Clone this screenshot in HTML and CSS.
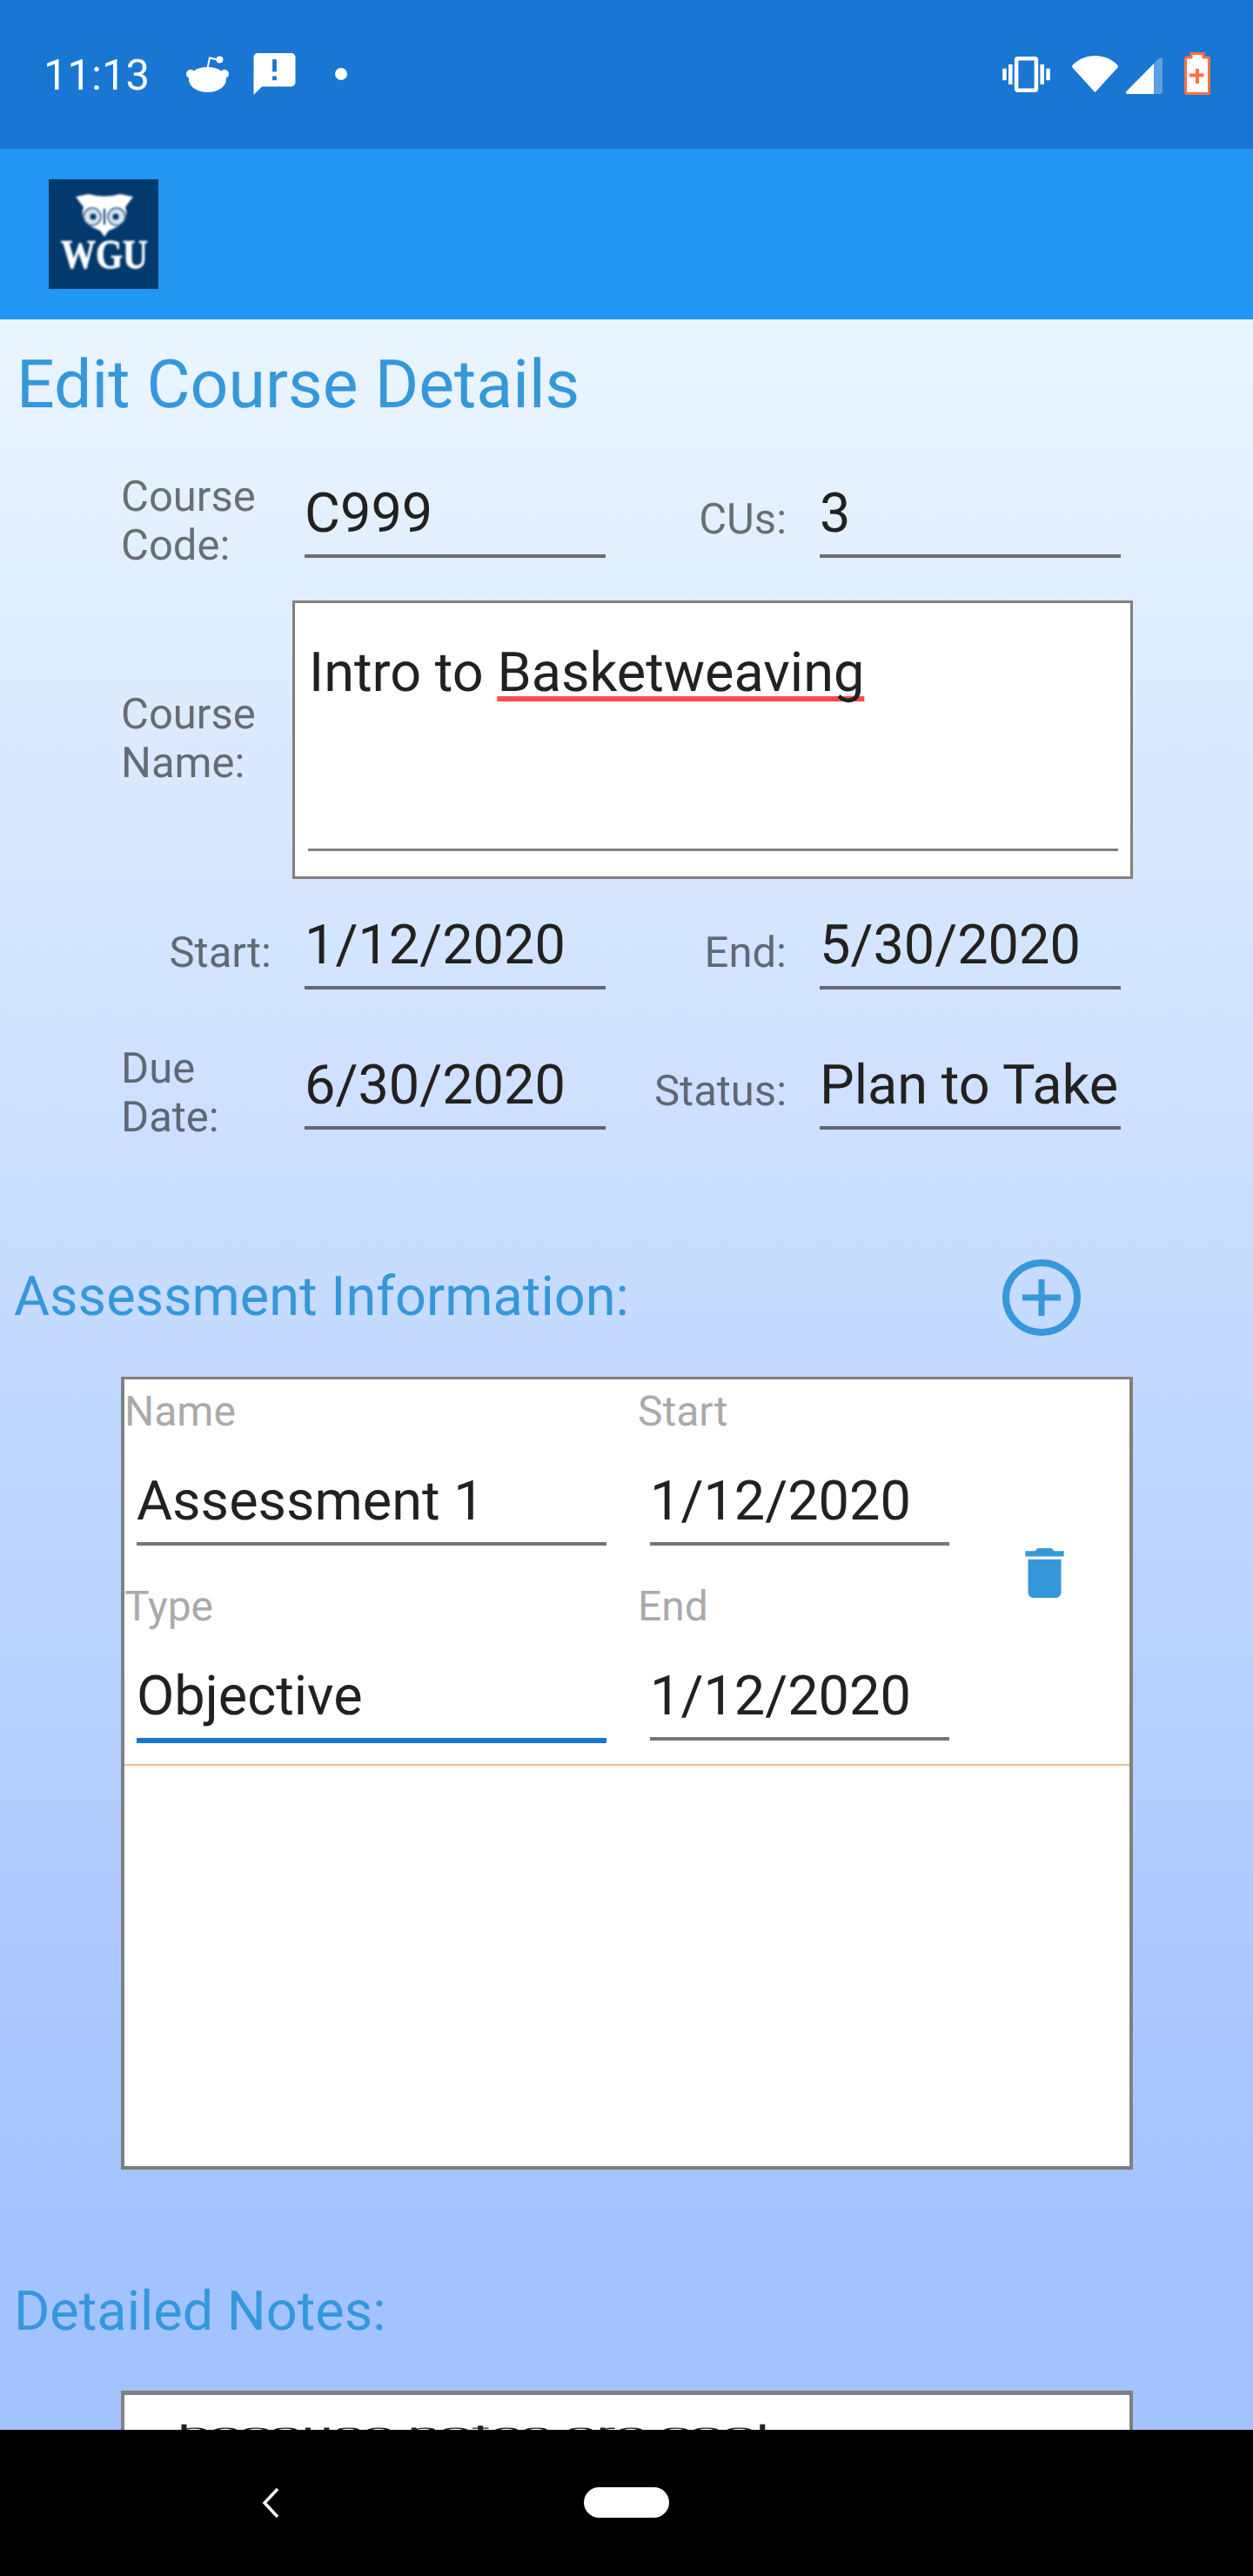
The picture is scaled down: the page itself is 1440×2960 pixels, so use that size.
FILE: index.html
```html
<!DOCTYPE html>
<html lang="en">
<head>
<meta charset="utf-8">
<title>Edit Course Details</title>
<link rel="stylesheet" href="styles.css">
</head>
<body>
<div class="screen">
  <header class="status-bar">
    <span class="clock">11:13</span>
    <svg class="ico-reddit" viewBox="0 0 49 42"><circle cx="5" cy="21" r="5" fill="#fff"/><circle cx="44" cy="21" r="5" fill="#fff"/><ellipse cx="24.5" cy="27.5" rx="21.5" ry="14.5" fill="#fff"/><path d="M24.5 14L27 2.5l9 2" fill="none" stroke="#fff" stroke-width="2"/><circle cx="38.5" cy="4.5" r="4" fill="#fff"/></svg>
    <svg class="ico-alert" viewBox="2 2 20 20"><path fill="#fff" d="M20 2H4c-1.1 0-1.99.9-1.99 2L2 22l4-4h14c1.1 0 2-.9 2-2V4c0-1.100-.9-2-2-2zm-7 9h-2V5h2v6zm0 4h-2v-2h2v2z"/></svg>
    <span class="dot"></span>
    <span class="status-spacer"></span>
    <svg class="ico-vibrate" viewBox="0 3 24 18"><path fill="#fff" d="M0 15h2V9H0v6zm3 2h2V7H3v10zm19-8v6h2V9h-2zm-3 8h2V7h-2v10zM16.500 3h-9C6.670 3 6 3.670 6 4.500v15c0 .83.67 1.500 1.500 1.500h9c.83 0 1.500-.67 1.500-1.500v-15c0-.83-.67-1.500-1.500-1.500zM16 19H8V5h8v14z"/></svg>
    <svg class="ico-wifi" viewBox="0 0 53 43"><path fill="#fff" d="M1 11.500C8 4.500 17 1 26.500 1S45 4.500 52 11.500c1 1 1 2 .4 3.200L28 41.500c-.9 1.700-2.200 1.700-3.100 0L.6 14.700c-.6-1.200-.6-2.200.4-3.200z"/></svg>
    <svg class="ico-signal" viewBox="0 0 42 42"><path fill="#fff" fill-opacity=".3" d="M32 7l6-6c2-1.500 4-1 4 1v38c0 1-1 2-2 2h-8z"/><path fill="#fff" d="M32 7v35H2c-2 0-2.500-1.500-1.500-3z"/></svg>
    <svg class="ico-battery" viewBox="0 0 30 49"><path fill="#fff" stroke="#ff7043" stroke-width="3" d="M8 6V1.500h14V6h5c1 0 1.500.5 1.500 1.500V46c0 1-.5 1.500-1.500 1.500H3c-1 0-1.500-.5-1.500-1.500V7.500C1.500 6.500 2 6 3 6z"/><path fill="#ff7043" d="M13 19h4v5.500h5.500v4H17V36h-4v-7.500H6v-4h7z"/></svg>
  </header>

  <div class="app-bar">
    <svg class="logo" viewBox="0 0 126 126">
      <rect width="126" height="126" fill="#033a6e"/>
      <g class="logo-art">
        <path fill="#fff" d="M31 20l15-3q18 5 36 0l15 3-9 12q5 14-8 22-8 4-11 5l-5 7-5-7q-3-1-11-5-13-8-8-22z"/>
        <circle cx="50" cy="43" r="10" fill="#d7e3ee" stroke="#27567f" stroke-width="1.500"/>
        <circle cx="78" cy="43" r="10" fill="#d7e3ee" stroke="#27567f" stroke-width="1.500"/>
        <circle cx="51" cy="43" r="3.500" fill="#033a6e"/>
        <circle cx="77" cy="43" r="3.500" fill="#033a6e"/>
        <path d="M64 34v18" stroke="#033a6e" stroke-width="2"/>
        <text class="logo-text" transform="translate(14 102) scale(1 1.180)">WGU</text>
      </g>
    </svg>
  </div>

  <main class="content">
    <h1 class="page-title">Edit Course Details</h1>

    <section class="form">
      <div class="form-row">
        <label class="lbl lbl-two">Course Code:</label>
        <div class="field">C999</div>
        <label class="lbl lbl-end">CUs:</label>
        <div class="field">3</div>
      </div>
      <div class="name-row">
        <label class="lbl lbl-name">Course Name:</label>
        <div class="name-box">
          <div class="name-input">Intro to <span class="misspelt">Basketweaving</span></div>
        </div>
      </div>
      <div class="form-row row-dates">
        <label class="lbl lbl-end">Start:</label>
        <div class="field">1/12/2020</div>
        <label class="lbl lbl-end">End:</label>
        <div class="field">5/30/2020</div>
      </div>
      <div class="form-row row-due">
        <label class="lbl lbl-two">Due Date:</label>
        <div class="field">6/30/2020</div>
        <label class="lbl lbl-end">Status:</label>
        <div class="field">Plan to Take</div>
      </div>
    </section>

    <div class="section-head head-assess">
      <h2 class="section-title">Assessment Information:</h2>
      <svg class="ico-add" viewBox="0 0 90 88"><ellipse cx="45" cy="44" rx="41" ry="40" fill="none" stroke="#3498db" stroke-width="8"/><path d="M23 44h44M45 23v42" stroke="#3498db" stroke-width="7" fill="none"/></svg>
    </div>

    <div class="assess-box">
      <article class="assess-item">
        <div class="assess-grid">
          <div class="cell">
            <div class="cell-lbl">Name</div>
            <div class="field cell-field">Assessment 1</div>
          </div>
          <div class="cell">
            <div class="cell-lbl">Start</div>
            <div class="field cell-field">1/12/2020</div>
          </div>
          <div class="cell">
            <div class="cell-lbl">Type</div>
            <div class="field cell-field field-focus">Objective</div>
          </div>
          <div class="cell">
            <div class="cell-lbl">End</div>
            <div class="field cell-field">1/12/2020</div>
          </div>
        </div>
        <svg class="ico-trash" viewBox="5 3 14 18"><path fill="#3498db" d="M6 19c0 1.100.9 2 2 2h8c1.100 0 2-.9 2-2V7H6v12zM19 4h-3.500l-1-1h-5l-1 1H5v2h14V4z"/></svg>
      </article>
    </div>

    <div class="section-head head-notes">
      <h2 class="section-title">Detailed Notes:</h2>
    </div>

    <div class="notes-box"><span class="notes-text">because notes are cool</span></div>
  </main>

  <nav class="nav-bar">
    <svg class="ico-back" viewBox="0 0 20 34"><path d="M18 1L3 17l15 16" fill="none" stroke="#fff" stroke-width="3.500"/></svg>
    <span class="home-pill"></span>
  </nav>
</div>
</body>
</html>
```

FILE: styles.css
```css
* { box-sizing: border-box; }
html, body { margin: 0; padding: 0; }
body { font-family: Roboto, "Noto Sans", sans-serif; color: #212121; text-rendering: geometricPrecision; }

.screen { width: 1440px; height: 2960px; display: flex; flex-direction: column; overflow: hidden; background: #000; }

/* Status bar */
.status-bar { flex: 0 0 171px; background: #1976d2; display: flex; align-items: flex-start; padding-left: 50px; color: #fff; }
.clock { font-size: 49px; line-height: 57px; margin-top: 58px; width: 122px; }
.ico-reddit { width: 49px; height: 42px; margin: 64px 0 0 42px; }
.ico-alert { width: 49px; height: 48px; margin: 61px 0 0 28px; }
.dot { width: 14px; height: 14px; border-radius: 50%; background: #fff; margin: 78px 0 0 45px; }
.status-spacer { flex: 1; }
.ico-vibrate { width: 57px; height: 41px; margin-top: 65px; }
.ico-wifi { width: 53px; height: 43px; margin: 63px 0 0 24px; }
.ico-signal { width: 42px; height: 42px; margin: 66px 0 0 9px; }
.ico-battery { width: 30px; height: 49px; margin: 60px 49px 0 25px; }

/* App bar */
.app-bar { flex: 0 0 196px; background: #2196f3; display: flex; align-items: center; padding-left: 56px; }
.logo { width: 126px; height: 126px; display: block; }
.logo-art { filter: blur(.8px); }
.logo-text { font-family: "Liberation Serif", serif; font-weight: 700; font-size: 40px; fill: #fff; stroke: #fff; stroke-width: .6px; }

/* Content */
.content { flex: 1; min-height: 0; overflow: hidden; background: linear-gradient(180deg, #ebf5ff 0, #a3c3ff 2180px); }
.page-title { margin: 0; padding: 33px 0 0 19px; font-size: 77px; line-height: 84px; font-weight: 400; color: #3498db; }

.form { padding-left: 139px; width: 1302px; margin-top: 57px; }
.form-row { display: grid; grid-template-columns: 173px 384px 208px 384px; grid-template-rows: 112px; align-items: center; height: 112px; }
.form-row > .field:nth-child(2) { margin-left: 38px; }
.form-row > .field:nth-child(4) { margin-left: 38px; }

.lbl { font-size: 49px; line-height: 56px; color: rgba(0, 0, 0, .54); display: block; }
.lbl-two { padding-top: 4px; }
.lbl-end { text-align: right; }
.field { font-size: 63px; line-height: 74px; height: 87px; padding-bottom: 9px; border-bottom: 4px solid rgba(0, 0, 0, .54); white-space: nowrap; overflow: hidden; }

.name-row { display: flex; align-items: center; margin: 37px 0 27px; height: 320px; }
.lbl-name { width: 197px; padding-bottom: 2px; }
.name-box { flex: 1; height: 320px; background: #fff; border: 3px solid #808080; padding: 0 14px 0 15px; }
.name-input { height: 285px; border-bottom: 3px solid #808080; font-size: 63px; line-height: 74px; padding: 44px 0 0 1px; }
.misspelt { text-decoration: underline solid #ff4b4b 6px; text-decoration-skip-ink: none; text-underline-offset: 6px; }

.row-dates .lbl { padding-top: 3px; }
.row-due { margin-top: 49px; }

/* Section headings */
.section-head { display: flex; align-items: center; padding-left: 16px; }
.section-title { margin: 0; font-size: 63px; line-height: 74px; font-weight: 400; color: #3498db; }
.head-assess { margin-top: 136px; height: 90px; }
.ico-add { width: 90px; height: 88px; margin-left: 429px; }
.head-notes { margin-top: 127px; }

/* Assessment list */
.assess-box { margin: 46px 0 0 139px; width: 1163px; height: 911px; background: #fff; border: 4px solid #808080; border-top-width: 3px; }
.assess-item { display: flex; height: 444px; border-bottom: 2px solid #e8bd92; }
.assess-grid { display: grid; grid-template-columns: 590px 362px; grid-auto-rows: min-content; padding: 8px 0 0 0; }
.cell { display: block; }
.cell-lbl { font-size: 48px; line-height: 57px; color: #aaa; }
.cell-field { margin: 39px 0 41px 14px; border-bottom-color: #757575; }
.cell:nth-child(1) .cell-field, .cell:nth-child(3) .cell-field { width: 540px; }
.cell:nth-child(2) .cell-field, .cell:nth-child(4) .cell-field { width: 344px; }
.field-focus { border-bottom: 6px solid #1976d2; height: 90px; padding-bottom: 10px; margin-bottom: 38px; }
.ico-trash { width: 47px; height: 57px; margin: 194px 0 0 82px; }

/* Notes */
.notes-box { margin: 53px 0 0 139px; width: 1163px; height: 400px; background: #fff; border: 4px solid #808080; border-top-width: 5px; padding: 31px 0 0 61px; font-size: 66px; line-height: 74px; }
.notes-text { display: inline-block; transform: scaleY(.27); transform-origin: 0 0; white-space: nowrap; }

/* Nav bar */
.nav-bar { flex: 0 0 168px; background: #000; display: flex; align-items: flex-start; }
.ico-back { width: 20px; height: 34px; margin: 67px 0 0 301px; }
.home-pill { width: 98px; height: 35px; border-radius: 18px; background: #fff; margin: 66px 0 0 350px; }
```
